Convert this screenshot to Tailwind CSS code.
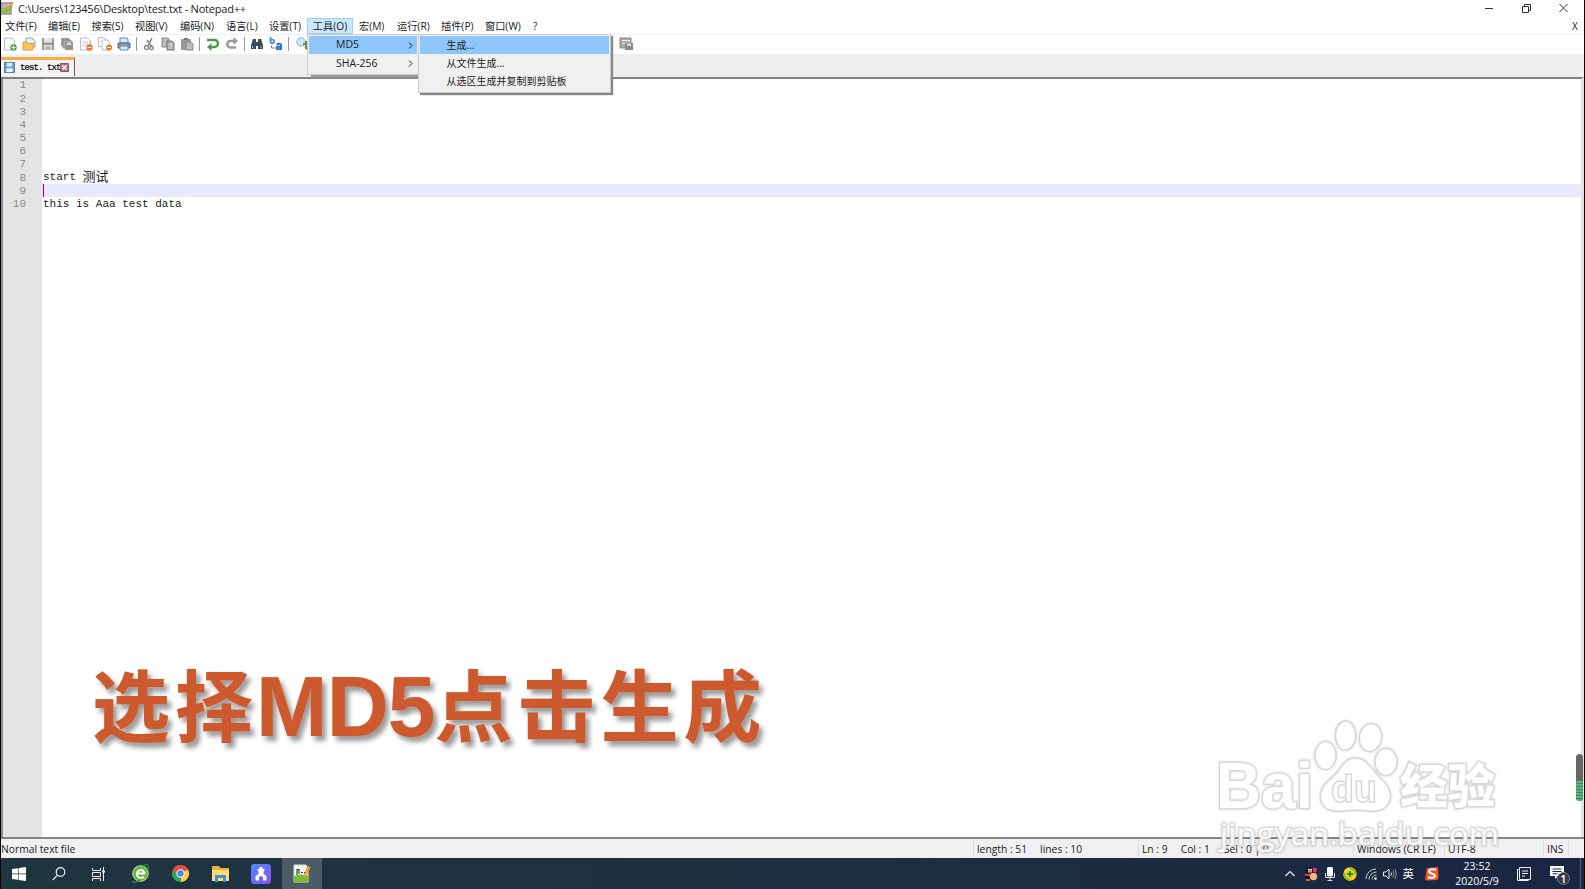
<!DOCTYPE html>
<html lang="zh-CN">
<head>
    <meta charset="UTF-8">
    <meta name="viewport" content="width=device-width, initial-scale=1.0">
    <title>C:\Users\123456\Desktop\test.txt - Notepad++</title>
    <script src="https://cdn.jsdelivr.net/npm/@tailwindcss/browser@4"></script>
</head>
<body class="relative flex h-[889px] w-[1585px] flex-col overflow-hidden border-x border-black bg-white font-['Open_Sans','Noto_Sans_CJK_SC',sans-serif] text-[10.5px] text-[#1a1a1a]">

    <!-- Title bar -->
    <header class="flex h-[18px] shrink-0 items-center">
        <svg class="mb-[3px] h-[15px] w-3" viewBox="0 0 12 15">
            <rect y="3" width="10" height="11" fill="#f4f4ec" stroke="#555"/>
            <path d="M0 8h9v6H0z" fill="#8cc152"/>
            <path d="M1 5h6M1 7h6" stroke="#777"/>
            <path d="M5 10l5-8 2 1-5 8z" fill="#e8b23a" stroke="#86652a" stroke-width=".5"/>
        </svg>
        <span class="ml-[5px] whitespace-nowrap text-[11px] tracking-[-0.22px]">C:\Users\123456\Desktop\test.txt - Notepad++</span>
        <svg class="mr-4 mb-[3px] ml-auto h-3 w-[84px]" viewBox="0 0 84 12" fill="none" stroke="#333">
            <path d="M1 6.500h8M38.500 4.500h6v6h-6zM40.500 4v-1.500h6v6h-2"/>
            <path d="M75.500 2l8 8M83.500 2l-8 8"/>
        </svg>
    </header>

    <!-- Menu bar -->
    <nav class="flex h-4 shrink-0 items-center whitespace-nowrap text-[10.2px] [&>span]:pt-0.5">
        <span class="ml-1 w-[43px]">文件(F)</span>
        <span class="w-[43.500px]">编辑(E)</span>
        <span class="w-[43.500px]">搜索(S)</span>
        <span class="w-[45px]">视图(V)</span>
        <span class="w-[46px]">编码(N)</span>
        <span class="w-[43px]">语言(L)</span>
        <span class="w-[38px]">设置(T)</span>
        <span class="flex h-4 w-[46px] items-center justify-center border border-[#99d1ff] bg-[#cce8ff]">工具(O)</span>
        <span class="ml-[6px] w-[38px]">宏(M)</span>
        <span class="w-[44px]">运行(R)</span>
        <span class="w-[44px]">插件(P)</span>
        <span class="w-[48px]">窗口(W)</span>
        <span>?</span>
        <span class="mr-[6px] ml-auto">X</span>
    </nav>

    <!-- Toolbar -->
    <div class="flex h-5 shrink-0 items-center border-t border-[#f0f0f0] pb-0.5 [&>svg]:mx-[2.500px] [&>svg]:size-3.5 [&>svg]:shrink-0 [&>i]:mx-[2.500px] [&>i]:h-3.5 [&>i]:w-px [&>i]:shrink-0 [&>i]:bg-[#999]">
        <svg class="!ml-[2px]" viewBox="0 0 14 14"><path d="M1.500 1h7l3 3v9h-10z" fill="#fff" stroke="#bbb"/><circle cx="10.500" cy="10.500" r="3.200" fill="#5a9e4b"/><path d="M10.500 8.500v4M8.500 10.500h4" stroke="#fff"/></svg>
        <svg viewBox="0 0 14 14"><path d="M4 1h6l3 3v6H4z" fill="#e9f2fb" stroke="#7fa8d2"/><path d="M1 5h4l1 1.500h6L10.500 13H1z" fill="#f8c860" stroke="#dc9a35"/></svg>
        <svg viewBox="0 0 14 14"><path d="M1 1h12v12H1z" fill="#999"/><path d="M3 1h8v4.500H3zM3 8h8v5H3z" fill="#e5e5e5"/><path d="M4 10h6M4 12h6" stroke="#999"/></svg>
        <svg viewBox="0 0 14 14"><path d="M1 1h8v8H1z" fill="#999"/><path d="M3 3h8v8H3z" fill="#aaa" stroke="#888"/><path d="M5 5h8v8H5z" fill="#939393"/><path d="M7 5.500h4V8H7z" fill="#ddd"/></svg>
        <svg viewBox="0 0 14 14"><path d="M1.500 1h7l3 3v9h-10z" fill="#fff" stroke="#bbb"/><path d="M3 5h6M3 7h6M3 9h4" stroke="#ccc"/><circle cx="10.500" cy="10.500" r="3.200" fill="#e87832"/><path d="M8.500 10.500h4" stroke="#fff"/></svg>
        <svg viewBox="0 0 14 14"><path d="M.5.500h6l1 1v8h-7z" fill="#fff" stroke="#bbb"/><path d="M4 3h5l3 3v7H4z" fill="#fff" stroke="#bbb"/><circle cx="11" cy="10.500" r="3" fill="#e87832"/><path d="M9 10.500h4" stroke="#fff"/></svg>
        <svg viewBox="0 0 14 14"><path d="M3 1h7l1 1v4H3z" fill="#d6e9fa" stroke="#6a8aad"/><path d="M1 6h12v5H1z" fill="#8d98a5" stroke="#5a6470"/><path d="M3 9h8v4H3z" fill="#d6e9fa" stroke="#6a8aad"/></svg>
        <i></i>
        <svg viewBox="0 0 14 14" fill="none" stroke="#888" stroke-width="1.500"><path d="M10 1L6 9M5 3l5 7"/><circle cx="4.500" cy="10.500" r="2"/><circle cx="9.500" cy="11" r="1.700"/></svg>
        <svg viewBox="0 0 14 14"><path d="M1 1h6l1 1v8H1z" fill="#bbb" stroke="#888"/><path d="M6 4h5l2 2v7H6z" fill="#aaa" stroke="#777"/><path d="M7.500 7h4M7.500 9h4M7.500 11h4" stroke="#ddd"/></svg>
        <svg viewBox="0 0 14 14"><path d="M1 2h10v11H1z" fill="#999"/><path d="M4 1h4v2H4z" fill="#777"/><path d="M6 5h5l2 2v6H6z" fill="#bbb" stroke="#888"/></svg>
        <i></i>
        <svg class="!ml-[3px]" viewBox="0 0 14 14"><path d="M1 3h7.500a3.200 3.200 0 010 7H5" fill="none" stroke="#4c9a50" stroke-width="2.500"/><path d="M5.500 6v8L1 10z" fill="#4c9a50"/></svg>
        <svg viewBox="0 0 14 14"><path d="M9 4H5.500a3.200 3.200 0 000 6.500H11" fill="none" stroke="#999" stroke-width="2.500"/><path d="M8.500 0v8L13 4z" fill="#999"/></svg>
        <i></i>
        <svg class="!ml-[3px]" viewBox="0 0 14 14"><path d="M3 2h3v3h2V2h3l2 6v4H8V9H6v3H1V8z" fill="#3f4b59"/><path d="M2.500 9v2M11 9v2" stroke="#aab6c4"/></svg>
        <svg viewBox="0 0 14 14" fill="none" stroke="#4a90d9" stroke-width="1.800"><path d="M1.500 0v6M1.500 4.500a1.800 1.800 0 103.600 0 1.800 1.800 0 10-3.600 0"/><path stroke="#3272c0" stroke-width="2" d="M7.500 7.500q4.500-2 4.500 1V13M12 10q-4.500-1-4.500 1.200 1.200 2.300 4.500 0"/><path stroke="#777" stroke-width="1" d="M2.500 8.500V11h3"/></svg>
        <i></i>
        <svg class="!ml-[4px]" viewBox="0 0 14 14"><circle cx="5" cy="5" r="4.300" fill="#cfe4f4" stroke="#94b5cf"/><path d="M9 10l3 3" stroke="#9c6d3c" stroke-width="2"/><path d="M10 4v6M7 7h6" stroke="#4b9c50" stroke-width="2"/></svg>
        <i class="!ml-[298px]"></i>
        <svg class="!ml-[5px]" viewBox="0 0 14 14"><path d="M1 1h11v10H1z" fill="#aaa" stroke="#888"/><path d="M3 3.500h8M3 6.500h4" stroke="#eee"/><path d="M6 6h8v7H6z" fill="#888"/><path d="M8 6.500h4V9H8z" fill="#ddd"/></svg>
    </div>

    <!-- Document tabs -->
    <div class="flex h-[23px] shrink-0 bg-[#efefef] pt-[3px]">
        <div class="flex h-[19px] w-[74px] items-center border-t-[3px] border-r border-t-[#f9ac45] border-r-[#666] bg-[#f3f3f3] pl-[3px]">
            <svg class="mb-px size-[11px] shrink-0" viewBox="0 0 12 12"><path d="M.5.500h11v11H.5z" fill="#6b9bd0" stroke="#4877a8"/><path d="M3 1h6v4H3z" fill="#d8e8f6"/><path d="M2.500 7h7v4h-7z" fill="#eef4fa"/></svg>
            <span class="ml-[5px] w-[40px] whitespace-pre pt-0.5 font-['Liberation_Mono',monospace] text-[9px] tracking-[-0.9px] text-black [-webkit-text-stroke:0.2px_#000]">test. txt</span>
            <svg class="mb-px size-[9px] shrink-0" viewBox="0 0 9 9"><path d="M.5.500h8v8h-8z" fill="#b7738a" stroke="#96546b"/><path d="M2.500 2.500l4 4M6.500 2.500l-4 4" stroke="#fff" stroke-width="1.500"/></svg>
        </div>
    </div>

    <!-- Editor -->
    <main class="flex min-h-0 flex-1 border-t-2 border-r-[3px] border-l-2 border-t-[#808080] border-r-[#e3e3e3] border-l-[#8a8a8a] font-['Liberation_Mono','Noto_Sans_CJK_SC',monospace] text-[11px]">
        <div class="w-[39px] shrink-0 bg-[#e4e4e4] text-[#8a8a8a] [&>div]:flex [&>div]:h-[13.200px] [&>div]:w-[23px] [&>div]:items-center [&>div]:justify-end">
            <div>1</div><div>2</div><div>3</div><div>4</div><div>5</div><div>6</div><div>7</div><div>8</div><div>9</div><div>10</div>
        </div>
        <div class="flex-1 pt-[92px] text-[#222] [&>div]:flex [&>div]:h-[13.200px] [&>div]:items-center [&>div]:whitespace-pre">
            <div class="pl-px">start <span class="text-[13px]">测试</span></div>
            <div class="bg-[#e8e8ff]"><span class="ml-px h-full w-px bg-[#8000a0]"></span></div>
            <div class="pl-px">this is Aaa test data</div>
        </div>
    </main>

    <!-- Status bar -->
    <footer class="flex h-[21px] shrink-0 items-center border-t-2 border-[#858585] bg-[#f0f0f0] text-[10.3px] whitespace-nowrap [&>*]:pt-0.5 [&>span]:border-l [&>span]:border-[#dcdcdc]">
        <div class="w-[972px]">Normal text file</div>
        <span class="w-[165px] pl-[3px]">length : 51<b class="ml-[13px] font-normal">lines : 10</b></span>
        <span class="w-[215px] pl-[3px]">Ln : 9<b class="ml-[13px] font-normal">Col : 1</b><b class="ml-[14px] font-normal">Sel : 0 | 0</b></span>
        <span class="w-[91px] pl-[3px]">Windows (CR LF)</span>
        <span class="w-[99px] pl-[3px]">UTF-8</span>
        <span class="w-[25px] pl-[3px]">INS</span>
        <span>&nbsp;</span>
    </footer>

    <!-- Taskbar -->
    <div class="flex h-[31px] shrink-0 items-center bg-linear-to-r from-[#1f3540] via-[#1d2f40] to-[#1a2542] text-white">
        <svg class="ml-[11px] size-3.5" viewBox="0 0 14 14" fill="#fff"><path d="M0 2l6-.8v5.400H0zM6.600 1.100L14 0v6.600H6.600zM0 7.300h6v5.400L0 12zM6.600 7.300H14V14l-7.400-1z"/></svg>
        <svg class="ml-[26px] size-3.5" viewBox="0 0 14 14" fill="none" stroke="#eee" stroke-width="1.200"><circle cx="8.500" cy="5" r="4.300"/><path d="M5.500 8.200L.8 13"/></svg>
        <svg class="ml-[26px] size-3.5" viewBox="0 0 14 14" fill="none" stroke="#eee"><path d="M.5 1v2.500h8V1M.5 5.500h8v4h-8zM.5 14v-2.500h8V14M11.500 0v14"/><path d="M10 4.500h3" stroke-width="2"/></svg>
        <svg class="ml-[25px] size-[19px]" viewBox="0 0 19 19"><circle cx="9.500" cy="9.500" r="7.800" fill="#62b739" stroke="#bfe3a8" stroke-width="1"/><path d="M14 9.500H6M13 12.500a4 4 0 11.800-3" fill="none" stroke="#fff" stroke-width="2"/><path d="M1 17Q4 20 9 16M12 2q6-4 5 3" fill="none" stroke="#318d38" stroke-width="1.300"/></svg>
        <svg class="ml-[21px] size-[19px]" viewBox="0 0 20 20"><path d="M10 10L2.200 5.500A9 9 0 0117.800 5.500L18 6z" fill="#e34e3d"/><path d="M10 10L17.800 5.500A9 9 0 0110 19z" fill="#fdcf43"/><path d="M10 10l0 9A9 9 0 012.200 5.500z" fill="#2fa657"/><path d="M10 1a9 9 0 00-7.800 4.500L6 12l4-6h7.900A9 9 0 0010 1z" fill="#e34e3d"/><circle cx="10" cy="10" r="4.400" fill="#fff"/><circle cx="10" cy="10" r="3.400" fill="#4688ec"/></svg>
        <svg class="ml-[21px] h-4 w-[19px]" viewBox="0 0 19 16"><path d="M1 0h7l1.500 2H18v13H1z" fill="#e8b23f"/><path d="M1 4h17v11H1z" fill="#fbdc79"/><path d="M4 9h11v7h-3v-4H7v4H4z" fill="#3f91d0"/></svg>
        <svg class="ml-[21px] size-5" viewBox="0 0 20 20"><defs><linearGradient id="app" x2="1" y2="1"><stop stop-color="#4f8cf6"/><stop offset="1" stop-color="#884bf5"/></linearGradient></defs><rect width="20" height="20" rx="3" fill="url(#app)"/><path d="M8.500 3h3v2h2v1.500l-1 1V10l3 2v4.500H12V14a2 2 0 00-4 0v2.500H4.500V12l3-2V7.500l-1-1V5h2z" fill="#fff"/></svg>
        <div class="ml-[11px] flex h-full w-[40px] items-center justify-center bg-[#4b5c66]">
            <svg class="h-[19px] w-[18px]" viewBox="0 0 18 19"><path d="M1 1h12l2 3v14H1z" fill="#f8faef" stroke="#deded5"/><path d="M1 12q7-3 14 0v6H1z" fill="#78bd30"/><path d="M4 11V5.500h2V10M8 8.500h2M11 8.500h2" fill="none" stroke="#345" stroke-width="1.200"/><path d="M10 13l5-11 2.500 1.300L12 14z" fill="#eeae35" stroke="#b9792b" stroke-width=".5"/></svg>
        </div>
        <div class="ml-auto flex h-full items-center">
            <svg class="h-[7px] w-2.5" viewBox="0 0 10 7" fill="none" stroke="#eee" stroke-width="1.200"><path d="M.5 6L5 1.500 9.500 6"/></svg>
            <svg class="ml-[9px] size-3.5" viewBox="0 0 14 14"><ellipse cx="6" cy="8" rx="5" ry="5.500" fill="#161616"/><circle cx="6" cy="4" r="3.800" fill="#161616"/><path d="M4 4.800h4" stroke="#f5a52e" stroke-width="1.500"/><circle cx="5" cy="2.800" r="1" fill="#fff"/><circle cx="7.200" cy="2.800" r="1" fill="#fff"/><path d="M9 .5l4 1-1 4-3-1zM1 6.500l5 .5v2L1 8.500z" fill="#e4388f"/><circle cx="9.500" cy="9.500" r="3.700" fill="#f6b281"/><path d="M2 13h4" stroke="#e78d30" stroke-width="1.500"/></svg>
            <svg class="ml-[7px] h-3.5 w-2.5" viewBox="0 0 10 14"><rect x="2" width="6" height="9.500" rx="1.500" fill="#fff"/><path d="M.5 6v4.500h9V6M5 10v3.500M2.500 13.500h5" fill="none" stroke="#ddd"/></svg>
            <svg class="ml-2 size-3.5" viewBox="0 0 14 14"><circle cx="7" cy="7" r="6.700" fill="#f4d817"/><path d="M7 .3a6.700 6.700 0 016.700 6.700L10 9 7 4zM7 13.700A6.700 6.700 0 01.3 7L4 5l3 5z" fill="#93b927"/><circle cx="7" cy="7" r="4.500" fill="#f4d817"/><path d="M7 4v6M4 7h6" stroke="#28852f" stroke-width="2"/></svg>
            <svg class="ml-2 h-3 w-3" viewBox="0 0 12 12" fill="none" stroke="#ccc"><path d="M1 11A10 10 0 0111 1M4 11.500A7.500 7.500 0 0111.500 4M7 11.500A4.500 4.500 0 0111.500 7" /><circle cx="10.500" cy="10.500" r="1" fill="#fff"/></svg>
            <svg class="ml-[6px] h-3 w-[14px]" viewBox="0 0 14 12" fill="none" stroke="#eee"><path d="M.5 4h2.500l3-3v10l-3-3H.5z"/><path d="M8 4.500q1 1.500 0 3" /><path d="M10 2.500q2 3.500 0 7M12 1q3 5 0 10" stroke="#899"/></svg>
            <span class="ml-[6px] pt-px text-[11.5px]">英</span>
            <svg class="ml-[11px] size-3.5" viewBox="0 0 14 14"><path d="M2 1l11-1 .5 11L12 13l-10.500.5L0 12z" fill="#ef5a24"/><path d="M11 2.700Q4 1.500 4 4.500C4 7 10 6.200 10 8.800S5 11 3 10.300" fill="none" stroke="#fff" stroke-width="2"/></svg>
            <div class="ml-[15px] w-[46px] pt-px text-center text-[10.500px] leading-[15.500px]">23:52<br>2020/5/9</div>
            <svg class="ml-[17px] size-3.5" viewBox="0 0 14 14" fill="none" stroke="#eee"><path d="M2.500.500h11v12h-11zM2.500 2.500h-2v11h11M5 4h6M5 6.500h6M5 9h3"/></svg>
            <svg class="ml-[19px] h-[22px] w-5" viewBox="0 0 20 22"><path d="M0 3h14v10H8l-3 3v-3H0z" fill="#fff"/><path d="M2.500 6h9M2.500 8.500h9M2.500 10.800h5" stroke="#1a2742"/><circle cx="13.500" cy="15.500" r="6" fill="#333a44" stroke="#777e88"/><text x="13.500" y="19.500" text-anchor="middle" fill="#fff" font-family="Open Sans" font-weight="600" font-size="11">1</text></svg>
            <span class="mr-[3px] ml-[10px] h-full w-px bg-[#56617a]"></span>
        </div>
    </div>

    <!-- Tools menu -->
    <div class="absolute top-[34px] left-[306px] w-[112px] border border-[#ccc] bg-[#f0f0f0] p-px shadow-[4px_3px_1px_#999]">
        <div class="flex h-[18px] items-center bg-[#8ec6fa] pl-[27px] text-[10.500px]">MD5
            <svg class="mr-[4px] ml-auto h-[7px] w-[5px]" viewBox="0 0 5 7" fill="none" stroke="#222"><path d="M1 .5l3 3-3 3"/></svg>
        </div>
        <div class="flex h-[19px] items-center pl-[27px] text-[10.500px]">SHA-256
            <svg class="mr-[4px] ml-auto h-[7px] w-[5px]" viewBox="0 0 5 7" fill="none" stroke="#222"><path d="M1 .5l3 3-3 3"/></svg>
        </div>
    </div>
    <div class="absolute top-[34px] left-[417px] w-[193px] border border-[#ccc] bg-[#f0f0f0] p-px pb-[2px] text-[10px] shadow-[2px_2px_1px_#888] [&>div]:flex [&>div]:h-[18px] [&>div]:items-center [&>div]:pl-[26.500px]">
        <div class="bg-[#8ec6fa]">生成...</div>
        <div>从文件生成...</div>
        <div>从选区生成并复制到剪贴板</div>
    </div>

    <!-- Caption -->
    <div class="absolute top-[649px] left-[91px] font-['Liberation_Sans','Noto_Sans_CJK_SC',sans-serif] text-[78px] leading-[120px] font-bold tracking-[5px] whitespace-nowrap text-[#cc5a2e] [text-shadow:0_0_1px_#f0a080,4px_5px_5px_rgba(0,0,0,0.4)]">选择<span class="-ml-[2px] text-[86px] leading-[1px] tracking-[-1px]">MD5</span>点击生成</div>

    <!-- Volume level at the screen edge -->
    <div class="absolute top-[754px] left-[1575px] flex h-[47px] w-[7px] flex-col justify-end overflow-hidden rounded-full bg-[#666]">
        <div class="h-[21px] bg-[repeating-linear-gradient(#3a8a5c_0_1px,#58b07c_1px_3px)]"></div>
    </div>

    <!-- Watermark -->
    <svg class="absolute top-[711px] left-[1210px] h-[150px] w-[300px] drop-shadow-[0_0_1px_rgba(0,0,0,0.2)]" viewBox="0 0 300 150" fill="#fff" stroke="#d8d8d8" stroke-width="1.500">
        <g font-family="Liberation Sans" font-weight="bold" paint-order="stroke" stroke-width="2.500">
            <text x="5" y="96.500" font-size="65" textLength="97" lengthAdjust="spacingAndGlyphs">Bai</text>
            <text x="189" y="92" font-size="47" font-family="Noto Sans CJK SC" font-weight="900" textLength="95" lengthAdjust="spacingAndGlyphs">经验</text>
        </g>
        <ellipse cx="114.500" cy="44.500" rx="10.500" ry="14"/>
        <ellipse cx="134.500" cy="24.500" rx="10" ry="14.500"/>
        <ellipse cx="159.500" cy="26.500" rx="11" ry="14" transform="rotate(10 159.500 26.500)"/>
        <ellipse cx="175" cy="51" rx="11" ry="13.500"/>
        <path d="M144.500 47c-10 0-14 9-19 15s-16 12-16 23 8 15 17 15 12-1 19-1 10 1 18 1 16-5 16-15-8-15-14-22-11-16-21-16z"/>
        <text x="120" y="91" font-family="Liberation Sans" font-size="38" font-weight="bold" textLength="46" lengthAdjust="spacingAndGlyphs">du</text>
        <text x="9" y="134" font-family="Open Sans" font-size="31" textLength="279" lengthAdjust="spacingAndGlyphs" stroke-width="2.500" fill-opacity=".85" paint-order="stroke" stroke-opacity=".8">jingyan.baidu.com</text>
    </svg>
</body>
</html>
